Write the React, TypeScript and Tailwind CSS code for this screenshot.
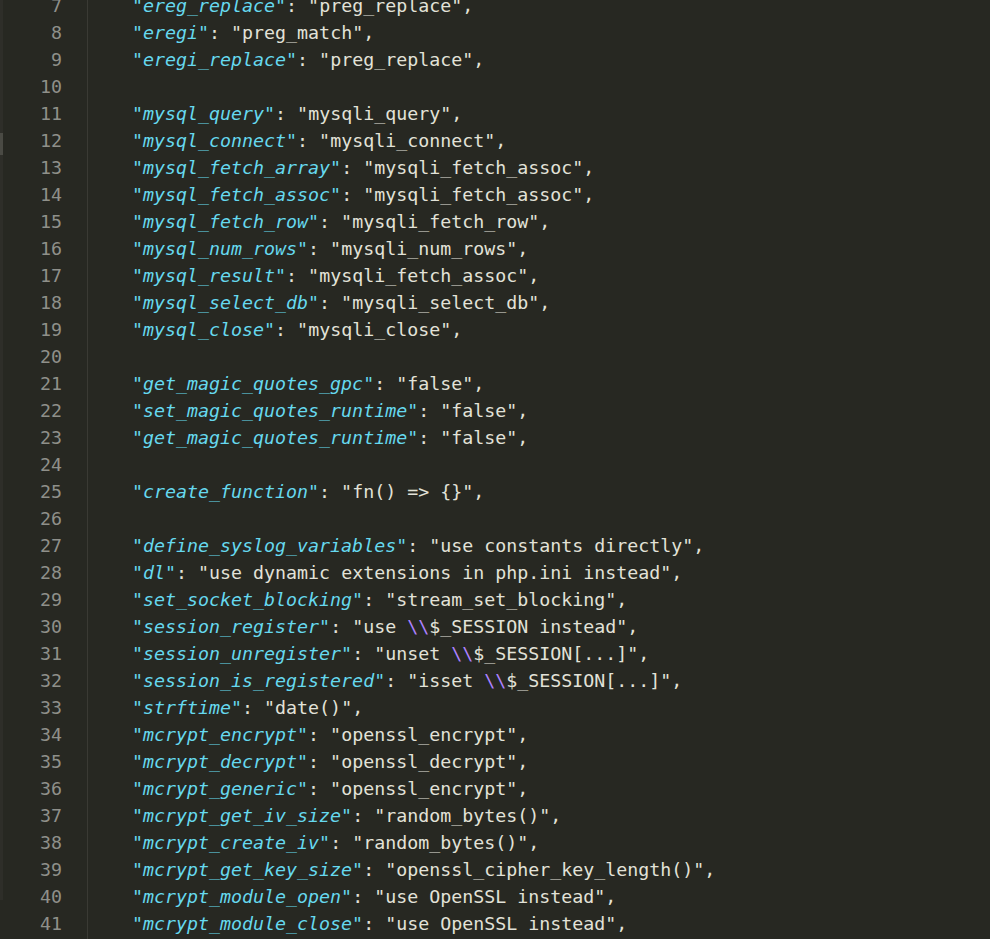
type Part = { t: string; c: "key" | "str" | "esc" | "p" };

const lines: (string[] | null)[] = [
  ["ereg_replace", "preg_replace"],
  ["eregi", "preg_match"],
  ["eregi_replace", "preg_replace"],
  null,
  ["mysql_query", "mysqli_query"],
  ["mysql_connect", "mysqli_connect"],
  ["mysql_fetch_array", "mysqli_fetch_assoc"],
  ["mysql_fetch_assoc", "mysqli_fetch_assoc"],
  ["mysql_fetch_row", "mysqli_fetch_row"],
  ["mysql_num_rows", "mysqli_num_rows"],
  ["mysql_result", "mysqli_fetch_assoc"],
  ["mysql_select_db", "mysqli_select_db"],
  ["mysql_close", "mysqli_close"],
  null,
  ["get_magic_quotes_gpc", "false"],
  ["set_magic_quotes_runtime", "false"],
  ["get_magic_quotes_runtime", "false"],
  null,
  ["create_function", "fn() => {}"],
  null,
  ["define_syslog_variables", "use constants directly"],
  ["dl", "use dynamic extensions in php.ini instead"],
  ["set_socket_blocking", "stream_set_blocking"],
  ["session_register", "use \\\\$_SESSION instead"],
  ["session_unregister", "unset \\\\$_SESSION[...]"],
  ["session_is_registered", "isset \\\\$_SESSION[...]"],
  ["strftime", "date()"],
  ["mcrypt_encrypt", "openssl_encrypt"],
  ["mcrypt_decrypt", "openssl_decrypt"],
  ["mcrypt_generic", "openssl_encrypt"],
  ["mcrypt_get_iv_size", "random_bytes()"],
  ["mcrypt_create_iv", "random_bytes()"],
  ["mcrypt_get_key_size", "openssl_cipher_key_length()"],
  ["mcrypt_module_open", "use OpenSSL instead"],
  ["mcrypt_module_close", "use OpenSSL instead"],
];

const colors = {
  key: "text-[#66d9ef] italic",
  str: "text-[#e2e2d8]",
  esc: "text-[#ae81ff]",
  p: "text-[#e2e2d8]",
};

function splitValue(v: string): Part[] {
  const i = v.indexOf("\\\\");
  if (i < 0) return [{ t: v, c: "str" }];
  return [
    { t: v.slice(0, i), c: "str" },
    { t: "\\\\", c: "esc" },
    { t: v.slice(i + 2), c: "str" },
  ];
}

function CodeLine({ entry }: { entry: string[] | null }) {
  if (!entry) return <div className="h-[27px]" />;
  const parts: Part[] = [
    { t: `"${entry[0]}"`, c: "key" },
    { t: ": \"", c: "p" },
    ...splitValue(entry[1]),
    { t: "\",", c: "p" },
  ];
  return (
    <div className="h-[27px] flex items-center whitespace-pre">
      {parts.map((p, i) => (
        <span key={i} className={colors[p.c]}>
          {p.t}
        </span>
      ))}
    </div>
  );
}

export default function App() {
  return (
    <div
      className="w-[990px] h-[939px] overflow-hidden bg-[#272822] flex text-[18.3px] leading-[27px]"
      style={{ fontFamily: '"DejaVu Sans Mono", "Liberation Mono", monospace' }}
    >
      <div className="w-[3px] flex flex-col shrink-0">
        <div className="h-[133px] bg-[#2e2e29]" />
        <div className="h-[22px] bg-[#4a4a44]" />
        <div className="h-[745px] bg-[#2e2e29]" />
      </div>
      <div className="w-[85px] shrink-0 border-r border-[#3a3a34] -mt-[8px] pr-[25px] text-right text-[#8f908a]">
        {lines.map((_, i) => (
          <div key={i} className="h-[27px] flex items-center justify-end">
            {i + 7}
          </div>
        ))}
      </div>
      <div className="flex-1 pl-[44px] -mt-[8px]">
        {lines.map((l, i) => (
          <CodeLine key={i} entry={l} />
        ))}
      </div>
    </div>
  );
}
